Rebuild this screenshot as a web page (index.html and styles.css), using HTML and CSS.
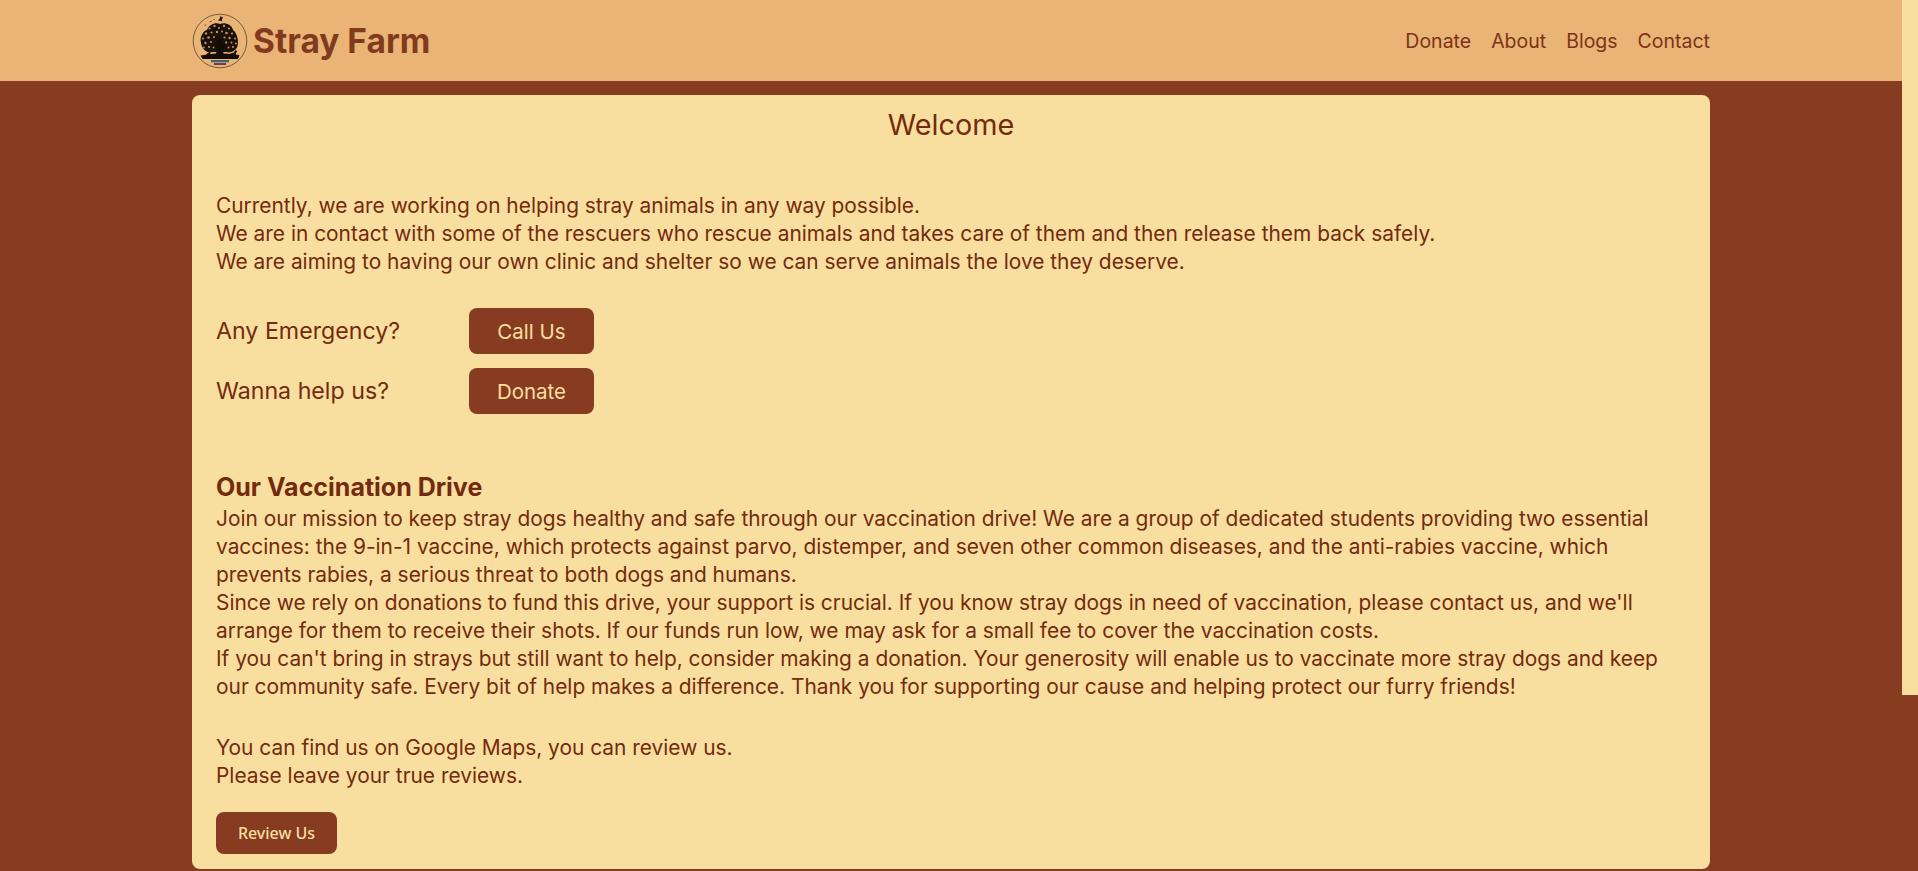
FILE: index.html
```html
<!DOCTYPE html>
<html lang="en">
<head>
<meta charset="utf-8">
<title>Stray Farm</title>
<link rel="stylesheet" href="styles.css">
</head>
<body>
<div class="scroll-thumb"></div>
<div class="page">
<header class="topbar">
  <div class="topbar-inner">
    <a class="brand" href="#">
      <svg class="logo" viewBox="0 0 56 56" aria-hidden="true">
        <circle cx="28" cy="28" r="26.800" fill="none" stroke="#6b4f33" stroke-width=".9"/>
        <path d="M26 8l2-3 .6-2.200 1.400 1.600 1.400-.4-1.200 1.800-.4 2.800-1.600-1.200z" fill="#1c120a"/>
        <path d="M17 8.500l3-.8-1 1.300zM12 12l2.500-.6-.8 1.100zM21 6.500l2-.4-.6.9z" fill="#3a281a"/>
        <path d="M9 30C7.500 24 11 18 15 17C17 11 24 9 28 11C33 9 40 12 41 17C45 20 47 28 45.500 33C44 38 38 40.500 34 39L21 39C15 41 10 36 9 30Z" fill="#1a110a"/>
        <g fill="#c2925a">
          <circle cx="17.500" cy="15.500" r="1.100"/><circle cx="22.500" cy="13" r="1.200"/><circle cx="27" cy="15" r="1"/><circle cx="32" cy="13" r="1.200"/><circle cx="37" cy="15.500" r="1.100"/>
          <circle cx="14" cy="20.500" r="1.200"/><circle cx="19.500" cy="19.500" r="1.100"/><circle cx="25" cy="19" r="1.200"/><circle cx="30" cy="18.500" r="1"/><circle cx="34.500" cy="20" r="1.300"/><circle cx="40" cy="20.500" r="1.100"/>
          <circle cx="11" cy="25.500" r="1.100"/><circle cx="16.500" cy="24.500" r="1.300"/><circle cx="22" cy="24" r="1"/><circle cx="32.500" cy="24.500" r="1.100"/><circle cx="37.500" cy="25" r="1.200"/><circle cx="43" cy="25.500" r="1"/>
          <circle cx="13.500" cy="30" r="1.200"/><circle cx="19" cy="29" r="1"/><circle cx="34" cy="29.500" r="1.200"/><circle cx="39.500" cy="29.500" r="1"/><circle cx="44" cy="30.500" r="1"/>
          <circle cx="12" cy="34.500" r=".9"/><circle cx="17" cy="34" r="1.100"/><circle cx="21.500" cy="34.500" r=".9"/><circle cx="36.500" cy="34.500" r="1"/><circle cx="41" cy="34" r="1.100"/>
        </g>
        <path d="M25 26L29.500 26L30 33L34 28L31 36L31.500 41L24 41L25 35L21 29L25.500 33Z" fill="#120b06"/>
        <path d="M8.500 42.500L23 40.500H33L47.500 42L46 46H10.500Z" fill="#120b06"/>
        <path d="M37 41l5-1.500 1.500-2.500 1.500 1-1 2.500-.5 2h-6.500z" fill="#120b06"/>
        <path d="M14.500 41l3-2 1 1.500-.5 2h-3.500z" fill="#120b06"/>
        <rect x="19" y="47" width="18" height="2.300" fill="#3f6474"/>
        <rect x="22" y="50" width="12" height="2" fill="#6a3f55"/>
      </svg>
      <span class="brand-name">Stray Farm</span>
    </a>
    <nav class="nav">
      <a href="#">Donate</a>
      <a href="#">About</a>
      <a href="#">Blogs</a>
      <a href="#">Contact</a>
    </nav>
  </div>
</header>
<main class="card">
  <h1 class="welcome">Welcome</h1>
  <p class="intro">Currently, we are working on helping stray animals in any way possible.<br>We are in contact with some of the rescuers who rescue animals and takes care of them and then release them back safely.<br>We are aiming to having our own clinic and shelter so we can serve animals the love they deserve.</p>
  <div class="cta-list">
    <div class="cta"><span class="cta-label">Any Emergency?</span><a class="btn btn-lg" href="#">Call Us</a></div>
    <div class="cta"><span class="cta-label">Wanna help us?</span><a class="btn btn-lg" href="#">Donate</a></div>
  </div>
  <h2 class="drive-title">Our Vaccination Drive</h2>
  <p class="drive">Join our mission to keep stray dogs healthy and safe through our vaccination drive! We are a group of dedicated students providing two essential vaccines: the 9-in-1 vaccine, which protects against parvo, distemper, and seven other common diseases, and the anti-rabies vaccine, which prevents rabies, a serious threat to both dogs and humans.<br>Since we rely on donations to fund this drive, your support is crucial. If you know stray dogs in need of vaccination, please contact us, and we'll arrange for them to receive their shots. If our funds run low, we may ask for a small fee to cover the vaccination costs.<br>If you can't bring in strays but still want to help, consider making a donation. Your generosity will enable us to vaccinate more stray dogs and keep our community safe. Every bit of help makes a difference. Thank you for supporting our cause and helping protect our furry friends!</p>
  <p class="maps">You can find us on Google Maps, you can review us.<br>Please leave your true reviews.</p>
  <a class="btn btn-sm" href="#">Review Us</a>
</main>
</div>
</body>
</html>
```
FILE: styles.css
```css
html {
  background: #873c22;
}
body {
  margin: 0;
  font-family: "Inter", "Open Sans", sans-serif;
  color: #742a0e;
  background: #873c22;
}
a {
  color: inherit;
  text-decoration: none;
}
.scroll-thumb {
  position: fixed;
  top: 0;
  right: 0;
  width: 16px;
  height: 695px;
  background: #f8df9f;
}
.page {
  width: 1902px;
  padding-bottom: 2px;
}
.topbar {
  height: 81px;
  background: #e9b476;
}
.topbar-inner {
  width: 1518px;
  height: 100%;
  margin: 0 auto;
  display: flex;
  align-items: center;
  justify-content: space-between;
}
.brand {
  display: flex;
  align-items: center;
  gap: 5px;
}
.logo {
  width: 56px;
  height: 56px;
  flex: none;
}
.brand-name {
  font-size: 33.500px;
  font-weight: 700;
  color: #823a1e;
}
.nav {
  display: flex;
  align-items: center;
  gap: 20px;
  font-size: 19.500px;
  font-weight: 400;
  color: #7d3316;
}
.card {
  width: 1470px;
  height: 774px;
  margin: 14px auto 0;
  padding: 0 24px;
  background: #f8df9f;
  border-radius: 8px;
}
.welcome {
  margin: 0;
  padding-top: 11px;
  text-align: center;
  font-size: 28.800px;
  line-height: 38px;
  font-weight: 400;
}
.intro {
  margin: 48px 0 0;
  font-size: 20.900px;
  line-height: 28px;
}
.cta-list {
  margin-top: 32px;
  display: flex;
  flex-direction: column;
  gap: 14px;
}
.cta {
  display: flex;
  align-items: center;
}
.cta-label {
  width: 253px;
  font-size: 23.200px;
}
.btn {
  display: flex;
  align-items: center;
  justify-content: center;
  border-radius: 8px;
  background: #873c22;
  color: #f8df9f;
}
.btn-lg {
  width: 125px;
  height: 46px;
  font-size: 20.500px;
}
.btn-sm {
  width: 121px;
  height: 42px;
  margin-top: 22px;
  font-family: "Noto Sans", sans-serif;
  font-size: 16px;
  font-weight: 500;
}
.drive-title {
  margin: 56px 0 0;
  font-size: 25px;
  line-height: 34px;
  font-weight: 700;
}
.drive {
  margin: 1px 0 0;
  font-size: 20.900px;
  line-height: 28px;
}
.maps {
  margin: 33px 0 0;
  font-size: 20.900px;
  line-height: 28px;
}
```
